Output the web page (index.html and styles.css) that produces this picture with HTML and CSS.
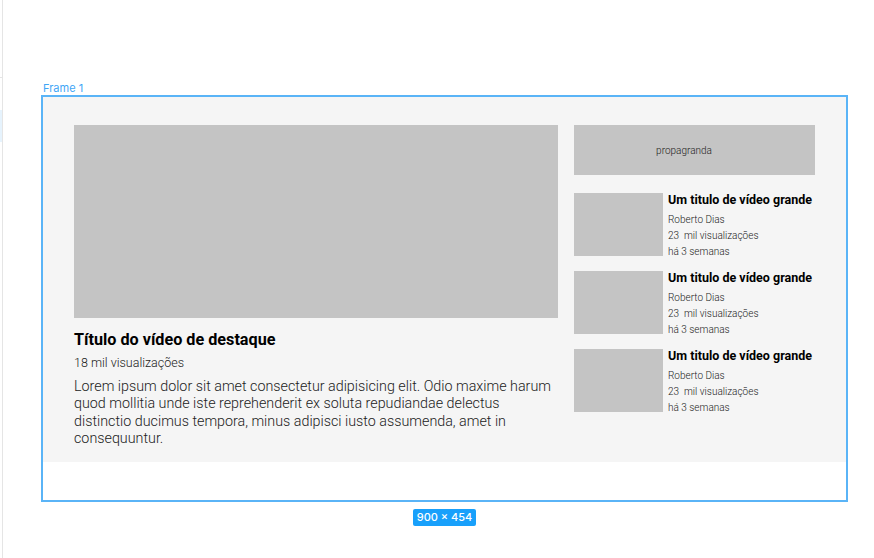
FILE: index.html
```html
<!DOCTYPE html>
<html lang="pt-BR">
<head>
<meta charset="utf-8">
<title>Frame 1</title>
<link rel="stylesheet" href="styles.css">
</head>
<body>
<div class="app">
  <div class="rail">
    <div class="rail-top"></div>
    <div class="rail-sel"></div>
  </div>
  <div class="canvas">
    <div class="frame-label">Frame 1</div>
    <div class="frame">
      <div class="page">
        <main class="featured">
          <div class="video"></div>
          <h1 class="feat-title">Título do vídeo de destaque</h1>
          <div class="feat-views">18 mil visualizações</div>
          <p class="feat-desc">Lorem ipsum dolor sit amet consectetur adipisicing elit. Odio maxime harum quod mollitia unde iste reprehenderit ex soluta repudiandae delectus distinctio ducimus tempora, minus adipisci iusto assumenda, amet in consequuntur.</p>
        </main>
        <aside class="side">
          <div class="ad">propagranda</div>
          <div class="card">
            <div class="thumb"></div>
            <div class="info">
              <div class="c-title">Um titulo de vídeo grande</div>
              <div class="c-line">Roberto Dias</div>
              <div class="c-line">23&nbsp; mil visualizações</div>
              <div class="c-line">há 3 semanas</div>
            </div>
          </div>
          <div class="card">
            <div class="thumb"></div>
            <div class="info">
              <div class="c-title">Um titulo de vídeo grande</div>
              <div class="c-line">Roberto Dias</div>
              <div class="c-line">23&nbsp; mil visualizações</div>
              <div class="c-line">há 3 semanas</div>
            </div>
          </div>
          <div class="card">
            <div class="thumb"></div>
            <div class="info">
              <div class="c-title">Um titulo de vídeo grande</div>
              <div class="c-line">Roberto Dias</div>
              <div class="c-line">23&nbsp; mil visualizações</div>
              <div class="c-line">há 3 semanas</div>
            </div>
          </div>
        </aside>
      </div>
    </div>
    <div class="badge-row"><span class="badge">900 × 454</span></div>
  </div>
</div>
</body>
</html>
```

FILE: styles.css
```css
* { box-sizing: border-box; }
html, body {
  margin: 0;
  padding: 0;
  background: #ffffff;
  font-family: Roboto, "Liberation Sans", sans-serif;
}
.app {
  display: flex;
  width: 874px;
  height: 558px;
  overflow: hidden;
}
.rail {
  width: 3px;
  flex: none;
  border-right: 1px solid #e5e5e5;
  padding-top: 77px;
}
.rail-top {
  height: 1px;
  background: #e5e5e5;
}
.rail-sel {
  margin-top: 32px;
  height: 32px;
  background: #e6f3fd;
}
.canvas {
  flex: 1;
  padding-left: 38px;
  padding-top: 81px;
}
.frame-label {
  font-family: Inter, Roboto, sans-serif;
  font-size: 11px;
  line-height: 14px;
  color: #3fa6f6;
  padding-left: 2px;
}
.frame {
  width: 807px;
  height: 407px;
  border: 2px solid #5ab4f7;
  background: #ffffff;
}
.page {
  display: flex;
  gap: 16px;
  height: 365px;
  background: #f5f5f5;
  padding: 28px 0 0 31px;
}
.featured {
  width: 484px;
  flex: none;
}
.video {
  height: 193px;
  background: #c4c4c4;
}
.feat-title {
  margin: 12px 0 0;
  font-size: 16.2px;
  line-height: 20px;
  font-weight: 700;
  color: #000;
}
.feat-views {
  margin-top: 5px;
  font-size: 12.5px;
  line-height: 16px;
  font-weight: 300;
  color: #222;
}
.feat-desc {
  margin: 7px 0 0;
  font-size: 14.3px;
  line-height: 17.4px;
  font-weight: 300;
  color: #222;
}
.side {
  width: 241px;
  flex: none;
  display: flex;
  flex-direction: column;
  gap: 15px;
}
.ad {
  height: 50px;
  margin-bottom: 3px;
  background: #c4c4c4;
  display: flex;
  align-items: center;
  justify-content: center;
  padding-right: 21px;
  font-size: 10px;
  font-weight: 300;
  color: #222;
}
.card {
  display: flex;
  align-items: flex-start;
  gap: 5px;
  height: 63px;
}
.thumb {
  width: 89px;
  height: 63px;
  flex: none;
  background: #c4c4c4;
}
.info {
  margin-top: -1px;
}
.c-title {
  font-size: 12.5px;
  line-height: 16px;
  font-weight: 700;
  color: #000;
  white-space: nowrap;
}
.c-line {
  font-size: 10px;
  line-height: 16px;
  font-weight: 300;
  color: #222;
}
.c-title + .c-line { margin-top: 4px; }
.badge-row {
  width: 807px;
  display: flex;
  justify-content: center;
  padding-top: 7px;
}
.badge {
  background: #18a0fb;
  color: #fff;
  font-family: Inter, Roboto, sans-serif;
  font-size: 11px;
  font-weight: 500;
  line-height: 17px;
  padding: 0 4px;
  border-radius: 2px;
}
```
